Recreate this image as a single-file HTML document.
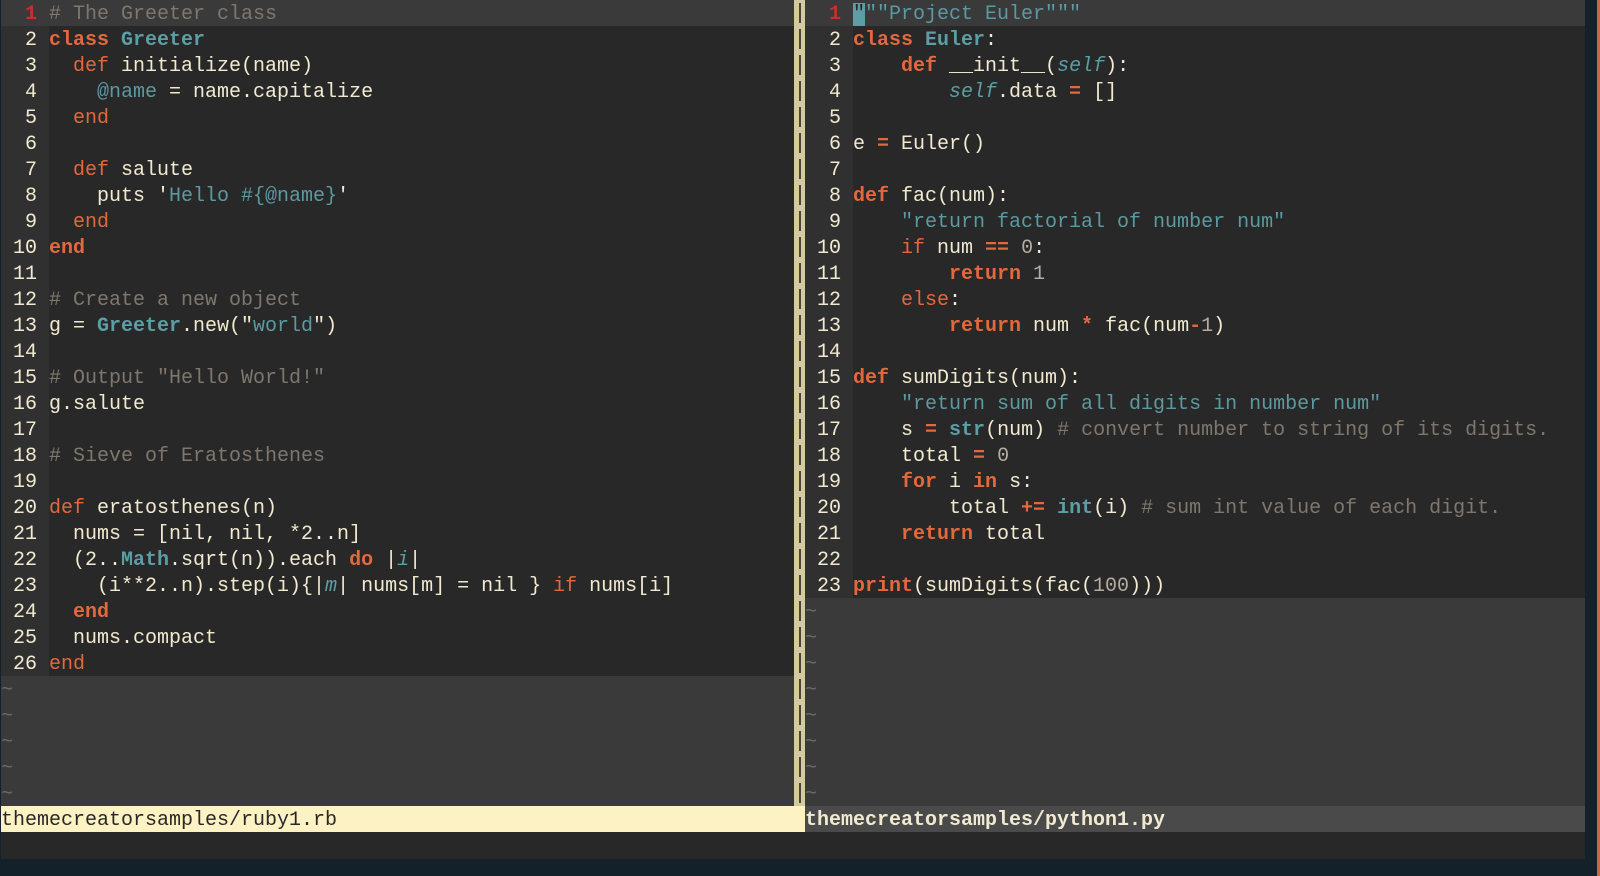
<!DOCTYPE html>
<html><head><meta charset="utf-8"><style>
html,body{margin:0;padding:0;width:1600px;height:876px;background:#13222a;overflow:hidden}
#ed{position:absolute;left:1px;top:0;width:1584px;height:859px;background:#282828}
.pane{position:absolute;top:0;height:806px;background:#3a3a3a;overflow:hidden}
.code{font-family:"Liberation Mono",monospace;font-size:20px;line-height:26px;color:#f2ead0}
.row{display:flex;height:26px;white-space:pre}
.g,.t,.tl{box-sizing:border-box;padding-top:3px;height:26px;line-height:23px}
.g{width:48px;text-align:right;background:#303030;color:#f2ead0;flex:none}
.t{flex:1;background:#282828}
.cl .t{background:#3a3a3a}
.cl .g{color:#c4302c;font-weight:bold;background:#3a3a3a}
.tl{color:#6a6a6a}
.k{color:#e3683e}.kb{color:#e3683e;font-weight:bold}
.ty{color:#5b9ea6;font-weight:bold}.s{color:#5a9aa0}.c{color:#7f776e}
.n{color:#b5ab9f}.it{color:#5b9ea6;font-style:italic}
#sep{position:absolute;left:793px;top:0;width:12px;height:806px;background:#d3cb9c}
#sep i{position:absolute;left:5px;width:2px;height:20px;background:#4a4636}
.st{position:absolute;top:806px;height:26px;box-sizing:border-box;padding-top:3px;font-family:"Liberation Mono",monospace;font-size:20px;line-height:23px;white-space:pre}
</style></head><body>
<div id="ed">
<div class="pane" style="left:0;width:793px"><div class="code">
<div class="row cl"><span class="g">1 </span><span class="t"><span class="c"># The Greeter class</span></span></div>
<div class="row"><span class="g">2 </span><span class="t"><span class="kb">class</span> <span class="ty">Greeter</span></span></div>
<div class="row"><span class="g">3 </span><span class="t">  <span class="k">def</span> initialize(name)</span></div>
<div class="row"><span class="g">4 </span><span class="t">    <span class="s">@name</span> = name.capitalize</span></div>
<div class="row"><span class="g">5 </span><span class="t">  <span class="k">end</span></span></div>
<div class="row"><span class="g">6 </span><span class="t"></span></div>
<div class="row"><span class="g">7 </span><span class="t">  <span class="k">def</span> salute</span></div>
<div class="row"><span class="g">8 </span><span class="t">    puts '<span class="s">Hello #{@name}</span>'</span></div>
<div class="row"><span class="g">9 </span><span class="t">  <span class="k">end</span></span></div>
<div class="row"><span class="g">10 </span><span class="t"><span class="kb">end</span></span></div>
<div class="row"><span class="g">11 </span><span class="t"></span></div>
<div class="row"><span class="g">12 </span><span class="t"><span class="c"># Create a new object</span></span></div>
<div class="row"><span class="g">13 </span><span class="t">g = <span class="ty">Greeter</span>.new("<span class="s">world</span>")</span></div>
<div class="row"><span class="g">14 </span><span class="t"></span></div>
<div class="row"><span class="g">15 </span><span class="t"><span class="c"># Output "Hello World!"</span></span></div>
<div class="row"><span class="g">16 </span><span class="t">g.salute</span></div>
<div class="row"><span class="g">17 </span><span class="t"></span></div>
<div class="row"><span class="g">18 </span><span class="t"><span class="c"># Sieve of Eratosthenes</span></span></div>
<div class="row"><span class="g">19 </span><span class="t"></span></div>
<div class="row"><span class="g">20 </span><span class="t"><span class="k">def</span> eratosthenes(n)</span></div>
<div class="row"><span class="g">21 </span><span class="t">  nums = [nil, nil, *2..n]</span></div>
<div class="row"><span class="g">22 </span><span class="t">  (2..<span class="ty">Math</span>.sqrt(n)).each <span class="kb">do</span> |<span class="it">i</span>|</span></div>
<div class="row"><span class="g">23 </span><span class="t">    (i**2..n).step(i){|<span class="it">m</span>| nums[m] = nil } <span class="k">if</span> nums[i]</span></div>
<div class="row"><span class="g">24 </span><span class="t">  <span class="kb">end</span></span></div>
<div class="row"><span class="g">25 </span><span class="t">  nums.compact</span></div>
<div class="row"><span class="g">26 </span><span class="t"><span class="k">end</span></span></div>
<div class="tl">~</div><div class="tl">~</div><div class="tl">~</div><div class="tl">~</div><div class="tl">~</div>
</div></div>
<div id="sep"><i style="top:3px"></i><i style="top:29px"></i><i style="top:55px"></i><i style="top:81px"></i><i style="top:107px"></i><i style="top:133px"></i><i style="top:159px"></i><i style="top:185px"></i><i style="top:211px"></i><i style="top:237px"></i><i style="top:263px"></i><i style="top:289px"></i><i style="top:315px"></i><i style="top:341px"></i><i style="top:367px"></i><i style="top:393px"></i><i style="top:419px"></i><i style="top:445px"></i><i style="top:471px"></i><i style="top:497px"></i><i style="top:523px"></i><i style="top:549px"></i><i style="top:575px"></i><i style="top:601px"></i><i style="top:627px"></i><i style="top:653px"></i><i style="top:679px"></i><i style="top:705px"></i><i style="top:731px"></i><i style="top:757px"></i><i style="top:783px"></i></div>
<div class="pane" style="left:804px;width:780px"><div class="code">
<div class="row cl"><span class="g">1 </span><span class="t"><span class="s"><span style="background:#5b9ea6;color:#282828">"</span>""Project Euler"""</span></span></div>
<div class="row"><span class="g">2 </span><span class="t"><span class="kb">class</span> <span class="ty">Euler</span>:</span></div>
<div class="row"><span class="g">3 </span><span class="t">    <span class="kb">def</span> __init__(<span class="it">self</span>):</span></div>
<div class="row"><span class="g">4 </span><span class="t">        <span class="it">self</span>.data <span class="kb">=</span> []</span></div>
<div class="row"><span class="g">5 </span><span class="t"></span></div>
<div class="row"><span class="g">6 </span><span class="t">e <span class="kb">=</span> Euler()</span></div>
<div class="row"><span class="g">7 </span><span class="t"></span></div>
<div class="row"><span class="g">8 </span><span class="t"><span class="kb">def</span> fac(num):</span></div>
<div class="row"><span class="g">9 </span><span class="t">    <span class="s">"return factorial of number num"</span></span></div>
<div class="row"><span class="g">10 </span><span class="t">    <span class="k">if</span> num <span class="kb">==</span> <span class="n">0</span>:</span></div>
<div class="row"><span class="g">11 </span><span class="t">        <span class="kb">return</span> <span class="n">1</span></span></div>
<div class="row"><span class="g">12 </span><span class="t">    <span class="k">else</span>:</span></div>
<div class="row"><span class="g">13 </span><span class="t">        <span class="kb">return</span> num <span class="kb">*</span> fac(num<span class="kb">-</span><span class="n">1</span>)</span></div>
<div class="row"><span class="g">14 </span><span class="t"></span></div>
<div class="row"><span class="g">15 </span><span class="t"><span class="kb">def</span> sumDigits(num):</span></div>
<div class="row"><span class="g">16 </span><span class="t">    <span class="s">"return sum of all digits in number num"</span></span></div>
<div class="row"><span class="g">17 </span><span class="t">    s <span class="kb">=</span> <span class="ty">str</span>(num) <span class="c"># convert number to string of its digits.</span></span></div>
<div class="row"><span class="g">18 </span><span class="t">    total <span class="kb">=</span> <span class="n">0</span></span></div>
<div class="row"><span class="g">19 </span><span class="t">    <span class="kb">for</span> i <span class="kb">in</span> s:</span></div>
<div class="row"><span class="g">20 </span><span class="t">        total <span class="kb">+=</span> <span class="ty">int</span>(i) <span class="c"># sum int value of each digit.</span></span></div>
<div class="row"><span class="g">21 </span><span class="t">    <span class="kb">return</span> total</span></div>
<div class="row"><span class="g">22 </span><span class="t"></span></div>
<div class="row"><span class="g">23 </span><span class="t"><span class="kb">print</span>(sumDigits(fac(<span class="n">100</span>)))</span></div>
<div class="tl">~</div><div class="tl">~</div><div class="tl">~</div><div class="tl">~</div><div class="tl">~</div><div class="tl">~</div><div class="tl">~</div><div class="tl">~</div>
</div></div>
<div class="st" style="left:0;width:804px;background:#fdf2c4;color:#282828">themecreatorsamples/ruby1.rb</div>
<div class="st" style="left:804px;width:780px;background:#4a4a4a;color:#f2ead0;font-weight:bold">themecreatorsamples/python1.py</div>
</div>
<div style="position:absolute;left:1597px;top:0;width:3px;height:876px;background:#c46a3c"></div>
</body></html>
